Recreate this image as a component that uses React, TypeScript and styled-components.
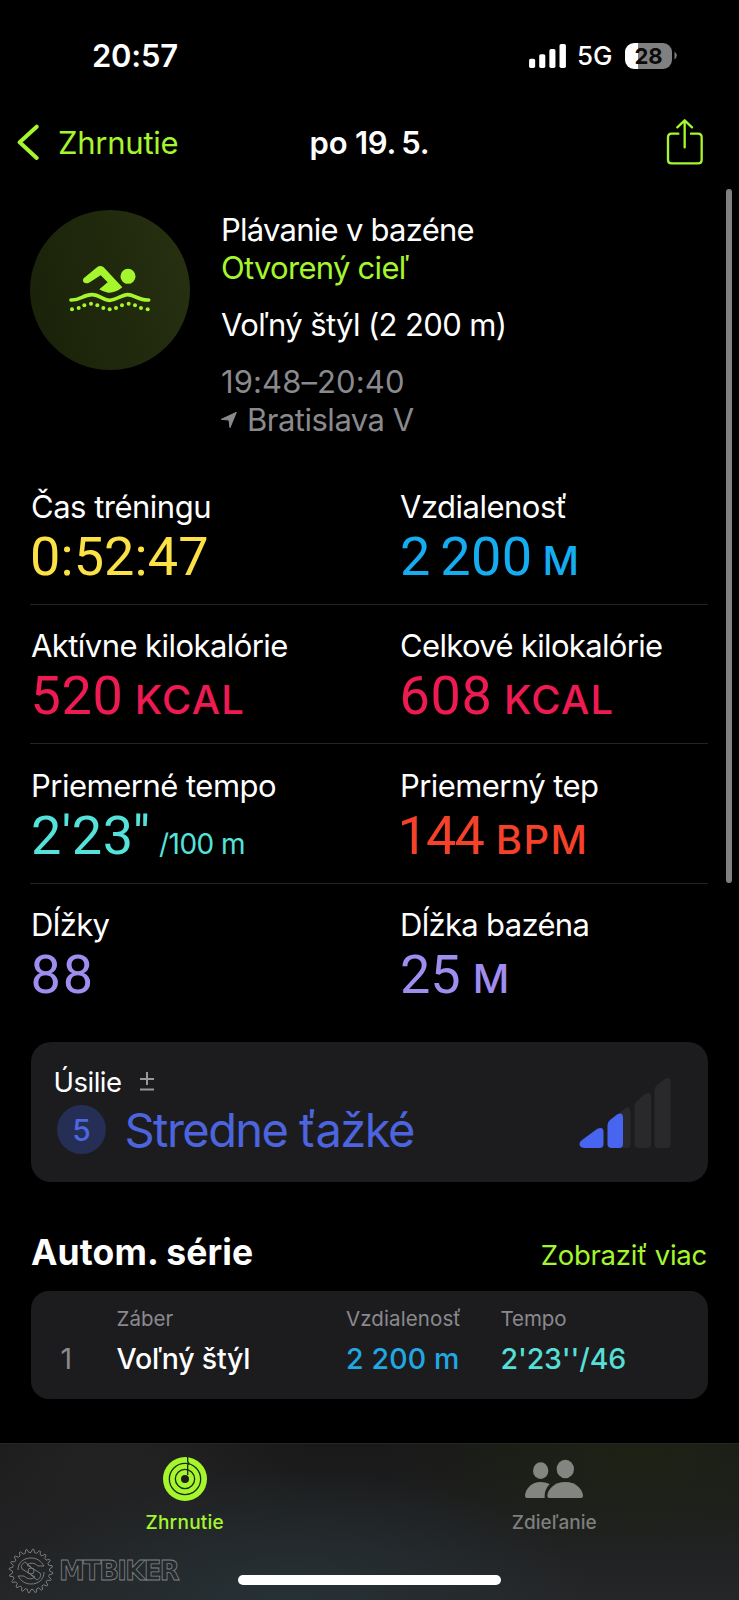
import React from "react";
import styled, { createGlobalStyle } from "styled-components";

const Global = createGlobalStyle`
  body { margin: 0; background: #000; }
  * { box-sizing: border-box; }
`;

const Screen = styled.div`
  position: relative;
  width: 739px;
  height: 1600px;
  overflow: hidden;
  display: flex;
  flex-direction: column;
  background: #000;
  color: #fff;
  font-family: Inter, "Noto Sans", sans-serif;
  white-space: pre;
`;

const Text = styled.span<{ $size: number; $line?: number; $weight?: number; $color?: string; $track?: number }>`
  font-size: ${(p) => p.$size}px;
  line-height: ${(p) => p.$line ?? 38}px;
  font-weight: ${(p) => p.$weight ?? 400};
  color: ${(p) => p.$color ?? "#fff"};
  letter-spacing: ${(p) => p.$track ?? 0}px;
`;

const StatusBar = styled.header`
  height: 111px;
  padding: 0 62px 0 92px;
  display: flex;
  align-items: center;
  justify-content: space-between;
`;
const StatusIcons = styled.div`
  display: flex;
  align-items: center;
`;
const Network = styled.div`
  width: 58px;
  padding-left: 10px;
`;
const Battery = styled.div`
  width: 47px;
  height: 26px;
  margin-right: 2px;
  border-radius: 9px;
  background: linear-gradient(90deg, #fff 13.3px, #808080 13.3px);
  display: flex;
  justify-content: center;
  align-items: center;
`;

const NavBar = styled.nav`
  height: 64px;
  padding: 0 16px;
  display: grid;
  grid-template-columns: 1fr auto 1fr;
  align-items: center;
`;
const Back = styled.div`
  display: flex;
  align-items: center;
  gap: 17px;
`;
const Share = styled.div`
  justify-self: end;
  height: 46px;
  margin: 0 20px 2px 0;
`;

const Hero = styled.section`
  padding: 35px 30px 0;
  height: 290px;
  display: flex;
  gap: 31px;
`;
const Badge = styled.div`
  width: 160px;
  height: 160px;
  border-radius: 50%;
  background: linear-gradient(75deg, #1a2209 10%, #262f10 90%);
  display: flex;
  align-items: center;
  justify-content: center;
`;
const HeroText = styled.div`
  display: flex;
  flex-direction: column;
  padding-top: 1px;
`;
const Gap = styled.div`
  height: 19px;
`;
const Place = styled.div`
  display: flex;
  align-items: center;
  gap: 10px;
`;

const Metrics = styled.section`
  padding: 0 31px 0 30px;
`;
const MetricRow = styled.div`
  height: 139.6px;
  padding-top: 22.5px;
  display: grid;
  grid-template-columns: 369px 1fr;
  border-bottom: 1px solid #232325;
  &:last-child { border-bottom: 0; }
`;
const Metric = styled.div`
  display: flex;
  flex-direction: column;
  gap: 4px;
  padding-left: 1px;
`;
const Value = styled.div<{ $color: string }>`
  height: 54px;
  display: flex;
  align-items: baseline;
  > span { color: ${(p) => p.$color}; }
`;
const Figure = styled.span<{ $track: number; $indent: number }>`
  font: 400 54px/54px Roboto, Inter, sans-serif;
  letter-spacing: ${(p) => p.$track}px;
  word-spacing: -4px;
  margin-left: ${(p) => p.$indent}px;
`;
const Unit = styled(Text)<{ $shift: number }>`
  margin-left: ${(p) => p.$shift}px;
`;

const EffortCard = styled.section`
  margin: 18.5px 31px 0 30.5px;
  height: 140.5px;
  border-radius: 20px;
  background: #1c1c1e;
  padding: 23px 37px 0 23px;
  display: flex;
  justify-content: space-between;
`;
const EffortTitle = styled.div`
  display: flex;
  align-items: center;
  gap: 18px;
  height: 34px;
`;
const EffortValue = styled.div`
  display: flex;
  align-items: center;
  gap: 18.5px;
  margin-top: 6px;
  padding-left: 3.5px;
`;
const Score = styled.div`
  width: 49px;
  height: 49px;
  border-radius: 50%;
  background: #252e54;
  display: flex;
  align-items: center;
  justify-content: center;
`;
const EffortChart = styled.svg`
  margin-top: 12px;
`;

const SectionHead = styled.div`
  margin: 47.5px 32px 0 31px;
  height: 44px;
  display: flex;
  align-items: baseline;
  justify-content: space-between;
`;
const TableCard = styled.section`
  margin: 17px 31px 0 30.5px;
  height: 108.5px;
  border-radius: 18px;
  background: #1c1c1e;
  padding: 14px 0 0;
`;
const TableRow = styled.div`
  display: grid;
  grid-template-columns: 86px 229.5px 154.5px 1fr;
  & + & { margin-top: 8px; }
  > :first-child { padding-left: 30px; }
`;

const TabBar = styled.footer`
  position: relative;
  margin-top: auto;
  height: 157px;
  display: flex;
  border-top: 1px solid #242525;
  background:
    radial-gradient(ellipse 300px 130px at 290px 157px, rgba(38, 50, 54, 0.95), rgba(38, 50, 54, 0)),
    radial-gradient(ellipse 260px 110px at 640px 10px, rgba(30, 35, 20, 0.9), rgba(30, 35, 20, 0)),
    radial-gradient(ellipse 200px 140px at 110px 20px, rgba(36, 36, 37, 0.9), rgba(36, 36, 37, 0)),
    linear-gradient(180deg, #19191a, #252628);
`;
const Tab = styled.div`
  flex: 1;
  padding-top: 13px;
  display: flex;
  flex-direction: column;
  align-items: center;
  gap: 8px;
`;
const HomeIndicator = styled.div`
  position: absolute;
  left: 238px;
  bottom: 15px;
  width: 263px;
  height: 10px;
  border-radius: 5px;
  background: #fff;
`;
const Watermark = styled.div`
  position: absolute;
  left: 8px;
  bottom: 6px;
  display: flex;
  align-items: center;
  gap: 5px;
`;
const WatermarkName = styled.span`
  font: 700 26px/30px "DejaVu Sans", sans-serif;
  letter-spacing: -1.7px;
  color: transparent;
  -webkit-text-stroke: 0.8px #818385;
`;
const ScrollThumb = styled.div`
  position: absolute;
  left: 726px;
  top: 189px;
  width: 6px;
  height: 694px;
  border-radius: 3px;
  background: #808080;
`;

const LIME = "#a6f62e";
const GRAY = "#8a8a8e";

const metrics = [
  [
    { label: "Čas tréningu", track: -0.5, value: "0:52:47", vt: 0.1, indent: -1, unit: "", shift: 0, ut: 0, color: "#fbe145" },
    { label: "Vzdialenosť", track: -0.5, value: "2 200", vt: 0.3, indent: 0, unit: "M", shift: -0.5, ut: 0, color: "#14adf2" },
  ],
  [
    { label: "Aktívne kilokalórie", track: -0.56, value: "520", vt: 0.6, indent: -0.5, unit: "KCAL", shift: -0.5, ut: 1.2, color: "#ee1a52" },
    { label: "Celkové kilokalórie", track: -0.66, value: "608", vt: 0.7, indent: -0.5, unit: "KCAL", shift: -0.5, ut: 1.2, color: "#ee1a52" },
  ],
  [
    { label: "Priemerné tempo", track: -0.5, value: "2'23''", vt: 0.5, indent: 0, unit: "/100 m", shift: 1, ut: -0.5, small: true, color: "#55e2da" },
    { label: "Priemerný tep", track: -0.57, value: "144", vt: -1.8, indent: -2.5, unit: "BPM", shift: 0.5, ut: 1.4, color: "#f5412a" },
  ],
  [
    { label: "Dĺžky", track: -0.6, value: "88", vt: 2, indent: -0.5, unit: "", shift: 0, ut: 0, color: "#a08df0" },
    { label: "Dĺžka bazéna", track: -0.68, value: "25", vt: 0, indent: 0, unit: "M", shift: 1.5, ut: 0, color: "#a08df0" },
  ],
];

const dots = [[155, 326], [175, 322], [192, 314], [212, 309], [231, 314], [249, 322], [268, 326], [287, 322], [305, 314], [325, 309], [344, 314], [362, 322], [382, 326]];

const Swimmer = () => (
  <svg width="85" height="50" viewBox="143 193 255 150" fill={LIME}>
    <circle cx="323" cy="227" r="22.5" />
    <path d="M191 232L231 199Q240 192 250 200L306 260Q286 277 264 276Q247 274 237 266L262 245L241 224L206 246Q195 251 189 243Q186 237 191 232Z" />
    <path d="M152 298C177 300 190 282 214 282S250 299 268 299S305 282 322 282S360 300 385 298" fill="none" stroke={LIME} strokeWidth="11" strokeLinecap="round" />
    {dots.map(([x, y]) => <circle key={x} cx={x} cy={y} r="6" />)}
  </svg>
);

const teeth = Array.from({ length: 20 }, (_, i) => {
  const at = (r: number, o: number) => {
    const a = ((i + o) / 20) * Math.PI * 2;
    return `${(23 + r * Math.cos(a)).toFixed(2)} ${(23 + r * Math.sin(a)).toFixed(2)}`;
  };
  return `${i ? "L" : "M"}${at(18.6, 0)}L${at(21.8, 0.22)}L${at(21.8, 0.42)}L${at(18.6, 0.64)}`;
}).join("") + "Z";

const Gear = () => (
  <svg width="46" height="46" viewBox="0 0 46 46" fill="none" stroke="#818385" strokeWidth="0.9">
    <path d={teeth} />
    <path d="M10 22C10 14 16 10 23 10C29 10 33 13 36 18L30 18C27 15 22 14 19 17L32 25C34 28 31 31 29 32L23 27" />
    <path d="M36 24C36 32 30 36 23 36C17 36 13 33 10 28L16 28C19 31 24 32 27 29L14 21C12 18 15 15 17 14L23 19" />
    <circle cx="23" cy="23" r="3" />
  </svg>
);

export default function App() {
  return (
    <Screen>
      <Global />
      <StatusBar>
        <Text $size={31} $weight={600} $track={-0.2}>20:57</Text>
        <StatusIcons>
          <svg width="38" height="24" viewBox="478 69 112 71" fill="#fff">
            <rect x="478" y="113" width="18" height="27" rx="5" />
            <rect x="508" y="99" width="18" height="41" rx="5" />
            <rect x="538" y="84" width="18" height="56" rx="5" />
            <rect x="568" y="69" width="19" height="71" rx="5" />
          </svg>
          <Network><Text $size={26} $weight={500}>5G</Text></Network>
          <Battery><Text $size={22} $line={26} $weight={700} $color="#0b0b0b">28</Text></Battery>
          <svg width="3" height="9" viewBox="0 0 3 9"><path d="M0.5 0.5Q5 4.500.5 8.500Z" fill="#808080" /></svg>
        </StatusIcons>
      </StatusBar>

      <NavBar>
        <Back>
          <svg width="25" height="38" viewBox="48 309 75 114">
            <path d="M110 317L59 364L110 411" fill="none" stroke={LIME} strokeWidth="12" strokeLinecap="round" strokeLinejoin="round" />
          </svg>
          <Text $size={31} $color={LIME} $track={-0.25}>Zhrnutie</Text>
        </Back>
        <Text $size={31} $weight={600} $track={-0.2}>{"po 19.\u20095."}</Text>
        <Share>
          <svg width="37" height="46" viewBox="889 296 111 138" fill="none" stroke={LIME} strokeWidth="7" strokeLinecap="round" strokeLinejoin="round">
            <path d="M926 340H906Q895 340 895 351V418Q895 429 906 429H985Q996 429 996 418V351Q996 340 985 340H964" />
            <path d="M945 381V301M923 321L945 300L967 321" />
          </svg>
        </Share>
      </NavBar>

      <Hero>
        <Badge><Swimmer /></Badge>
        <HeroText>
          <Text $size={31} $track={-0.74}>Plávanie v bazéne</Text>
          <Text $size={31} $track={-0.72} $color={LIME}>Otvorený cieľ</Text>
          <Gap />
          <Text $size={31} $track={-0.63}>Voľný štýl (2 200 m)</Text>
          <Gap />
          <Text $size={31} $track={0.1} $color={GRAY}>19:48–20:40</Text>
          <Place>
            <svg width="16" height="16" viewBox="604 640 48 48"><path d="M650 641L605 662L628 664L631 687Z" fill={GRAY} stroke={GRAY} strokeWidth="3" strokeLinejoin="round" /></svg>
            <Text $size={31} $track={-0.5} $color={GRAY}>Bratislava V</Text>
          </Place>
        </HeroText>
      </Hero>

      <Metrics>
        {metrics.map((row, i) => (
          <MetricRow key={i}>
            {row.map((m) => (
              <Metric key={m.label}>
                <Text $size={31} $track={m.track}>{m.label}</Text>
                <Value $color={m.color}>
                  <Figure $track={m.vt} $indent={m.indent}>{m.value}</Figure>
                  {m.unit && <Unit $size={"small" in m ? 28 : 40} $line={54} $weight={"small" in m ? 400 : 500} $track={m.ut} $shift={m.shift}>{" " + m.unit}</Unit>}
                </Value>
              </Metric>
            ))}
          </MetricRow>
        ))}
      </Metrics>

      <EffortCard>
        <div>
          <EffortTitle>
            <Text $size={27.5} $track={-0.5}>Úsilie</Text>
            <svg width="14" height="19" viewBox="0 0 14 19" stroke="#98989c" strokeWidth="2"><path d="M0 7H14M7 0V13M0 17.500H14" /></svg>
          </EffortTitle>
          <EffortValue>
            <Score><Text $size={30} $weight={500} $color="#4e68e2">5</Text></Score>
            <Text $size={47} $line={50} $track={-1.55} $color="#4c64de">Stredne ťažké</Text>
          </EffortValue>
        </div>
        <EffortChart width="92" height="72" viewBox="580 1076 92 72">
          <g fill="#29292c">
            <path d="M612 1119L625 1108Q631 1104 631.500 1111V1143Q631.500 1147 628 1147H612Z" />
            <path d="M635.500 1105Q635.500 1102 638 1100L646 1093Q651.500 1090 652 1096V1143Q652 1147 648 1147H639.500Q635.500 1147 635.500 1143Z" />
            <path d="M655.500 1089Q655.500 1086 658 1084L666 1078Q671.500 1075 671.500 1081V1143Q671.500 1147 667.500 1147H659.500Q655.500 1147 655.500 1143Z" />
          </g>
          <g fill="#4765ee">
            <path d="M583 1139L598 1128Q604.500 1125 604.500 1131V1143Q604.500 1147 600.500 1147H585Q579 1146 581 1141Z" />
            <path d="M608.500 1124Q608.500 1121 611 1119L618 1113.500Q624 1110.500 624 1117V1143Q624 1147 620 1147H612.500Q608.500 1147 608.500 1143Z" />
          </g>
        </EffortChart>
      </EffortCard>

      <SectionHead>
        <Text $size={35.5} $line={46} $weight={700} $track={0.1}>Autom. série</Text>
        <Text $size={27.5} $color={LIME} $track={-0.25}>Zobraziť viac</Text>
      </SectionHead>
      <TableCard>
        <TableRow>
          <span />
          <Text $size={20.5} $line={28} $track={0} $color={GRAY}>Záber</Text>
          <Text $size={20.5} $line={28} $track={0.1} $color={GRAY}>Vzdialenosť</Text>
          <Text $size={20.5} $line={28} $track={-0.1} $color={GRAY}>Tempo</Text>
        </TableRow>
        <TableRow>
          <Text $size={28.5} $line={36} $color={GRAY}>1</Text>
          <Text $size={28.5} $line={36} $weight={500} $track={-0.25}>Voľný štýl</Text>
          <Text $size={28.5} $line={36} $weight={500} $track={0.15} $color="#20a8e2">2 200 m</Text>
          <Text $size={28.5} $line={36} $weight={500} $track={-0.15} $color="#55dfd6">2'23''/46</Text>
        </TableRow>
      </TableCard>

      <TabBar>
        <Tab>
          <svg width="44" height="44" viewBox="-66 -66 132 132">
            <circle r="66" fill={LIME} />
            <g fill="none" stroke="#1e2a10" strokeWidth="4">
              <circle r="47" />
              <circle r="29" />
              <path d="M8 -66V-52L12 -47L8 -42V-12" />
            </g>
            <circle r="12" fill="#1e1f1c" />
          </svg>
          <Text $size={19} $line={28} $weight={500} $track={0.25} $color={LIME}>Zhrnutie</Text>
        </Tab>
        <Tab>
          <svg width="58" height="44" viewBox="463 81 174 132" fill="#838580">
            <ellipse cx="510" cy="122" rx="23" ry="25" />
            <ellipse cx="584" cy="117" rx="26" ry="28" />
            <path d="M537 162Q524 156 510 156C480 156 463 180 463 198Q463 204 469 204H522Q520 180 537 162Z" />
            <path d="M584 156C550 156 530 180 530 198Q530 204 536 204H631Q637 204 637 198C637 180 617 156 584 156Z" />
          </svg>
          <Text $size={19} $line={28} $weight={500} $color="#7d7f7d">Zdieľanie</Text>
        </Tab>
        <Watermark>
          <Gear />
          <WatermarkName>MTBIKER</WatermarkName>
        </Watermark>
        <HomeIndicator />
      </TabBar>
      <ScrollThumb />
    </Screen>
  );
}
